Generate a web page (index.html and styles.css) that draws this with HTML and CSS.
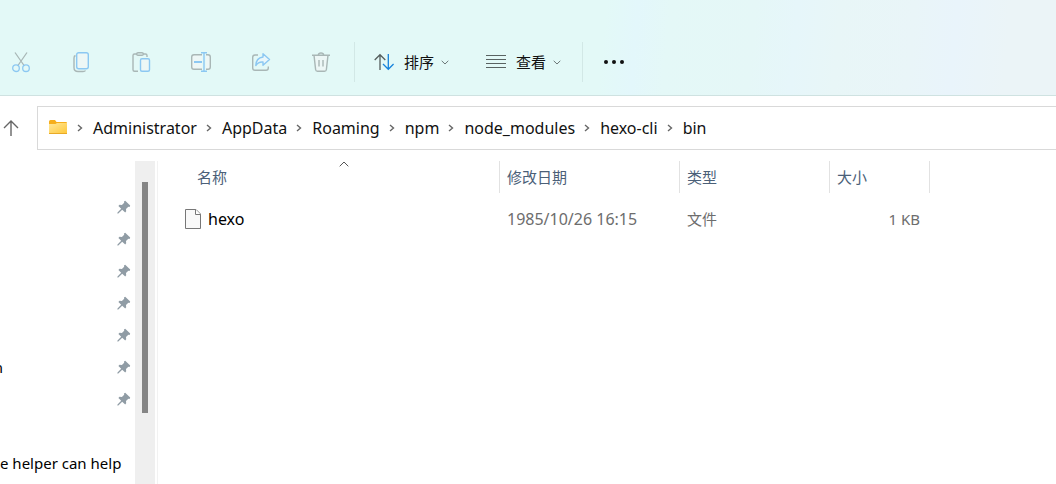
FILE: index.html
```html
<!DOCTYPE html>
<html lang="zh-CN">
<head>
<meta charset="utf-8">
<meta name="viewport" content="width=device-width, initial-scale=1">
<title>bin</title>
<link rel="stylesheet" href="styles.css">
</head>
<body>
<svg class="defs" aria-hidden="true">
  <symbol id="pin" viewBox="0 0 14 14"><path d="M8.2.8 13.2 5.6 12.6 7 11.3 6.7 9 9 9.2 11.2 8.2 12.4 5.2 9.7 1.3 13.4.3 13.6.5 12.6 4.2 8.7 1.4 5.9 2.5 4.8 4.9 4.9 7.2 2.7 7 1.5Z" fill="#909ca5"/></symbol>
  <symbol id="sep" viewBox="0 0 6 8"><path d="M1 1 4.5 4 1 7" fill="none" stroke="#666" stroke-width="1.4"/></symbol>
  <symbol id="down" viewBox="0 0 8 5"><path d="M.7.8 4 4 7.3.8" fill="none" stroke="#6c7777" stroke-width="1"/></symbol>
</svg>
<header class="toolbar">
  <button class="tool" aria-label="剪切"><svg width="20" height="22" viewBox="0 0 20 22" fill="none" stroke-width="1.3"><path d="M4 1.5 13.4 15M16 1.5 6.6 15" stroke="#a9b7b6"/><circle cx="5" cy="17.2" r="3.3" stroke="#8cc8f2"/><circle cx="15" cy="17.2" r="3.3" stroke="#8cc8f2"/></svg></button>
  <button class="tool" aria-label="复制"><svg width="20" height="22" viewBox="0 0 20 22" fill="none" stroke-width="1.4"><path d="M4.500 4.500Q3 5 3 7v9.500Q3 20.500 7 20.500H12q2 0 2.500-1" stroke="#a9b7b6"/><rect x="5.700" y="1.700" width="11.600" height="16" rx="2" fill="#edf7f6" stroke="#8cc8f2"/></svg></button>
  <button class="tool" aria-label="粘贴"><svg width="20" height="22" viewBox="0 0 20 22" fill="none" stroke-width="1.4"><path d="M7 20.300H3.500Q2 20.300 2 18.800V4.500Q2 3 3.500 3H6M12 3h2.500Q16 3 16 4.500V6" stroke="#a9b7b6"/><rect x="5.700" y="1.700" width="6.600" height="2.600" rx="1.300" stroke="#a9b7b6"/><rect x="9.500" y="7.700" width="9" height="12.600" rx="1.500" fill="#edf7f6" stroke="#8cc8f2"/></svg></button>
  <button class="tool" aria-label="重命名"><svg width="22" height="22" viewBox="0 0 22 22" fill="none" stroke-width="1.400"><path d="M12 18.300H4Q1.700 18.300 1.700 16V6Q1.700 3.700 4 3.700h8M16 3.700h2Q20.300 3.700 20.300 6v10q0 2.300-2.300 2.300h-2" fill="#edf7f6" stroke="#a9b7b6"/><path d="M14 2v18M11 1.700h6M11 20.300h6" stroke="#8cc8f2"/><path d="M4 11h8" stroke="#8cc8f2" stroke-width="2"/></svg></button>
  <button class="tool" aria-label="共享"><svg width="22" height="22" viewBox="0 0 22 22" fill="none" stroke-width="1.400" stroke-linejoin="round"><path d="M8 4H5Q2.700 4 2.700 6.300V17q0 2.300 2.300 2.300h11q2.300 0 2.300-2.300v-1.500" stroke="#a9b7b6"/><path d="M13 2.700 19.500 8.500 13 14.300V11Q8.500 10.500 5.800 14.500 6 7 13 6Z" fill="#e9f7fb" stroke="#8cc8f2"/></svg></button>
  <button class="tool" aria-label="删除"><svg width="20" height="22" viewBox="0 0 20 22" fill="none" stroke="#a9b7b6" stroke-width="1.400"><path d="M3 4.200 4.600 18.500Q4.800 20.300 6.500 20.300h7q1.700 0 1.900-1.800L17 4.200" fill="#edf7f6"/><path d="M1 4.200h18M7.300 4Q7.500 2 10 2t2.700 2M8 9v6.500M12 9v6.500"/></svg></button>
  <span class="divider"></span>
  <button class="menu"><svg width="20" height="18" viewBox="0 0 20 18" fill="none" stroke-width="1.300"><path d="M6 17V2M.7 7 6 1.700 11.300 7" stroke="#555e5d"/><path d="M14.300 1v15M9 11l5.300 5.300L19.600 11" stroke="#1583dc"/></svg><span>排序</span><svg width="8" height="5"><use href="#down"/></svg></button>
  <button class="menu"><svg width="20" height="14" viewBox="0 0 20 14" stroke="#596362"><path d="M0 .5h20M0 4.500h20M0 8.500h20M0 12.500h20"/></svg><span>查看</span><svg width="8" height="5"><use href="#down"/></svg></button>
  <span class="divider"></span>
  <button class="more" aria-label="更多"><svg width="22" height="6" viewBox="0 0 22 6" fill="#111"><circle cx="3" cy="3" r="2"/><circle cx="11" cy="3" r="2"/><circle cx="19" cy="3" r="2"/></svg></button>
</header>
<div class="address">
  <button class="up" aria-label="上移"><svg width="18" height="18" viewBox="0 0 18 18" fill="none" stroke="#666" stroke-width="1.400"><path d="M9 17V2M2 9l7-7 7 7"/></svg></button>
  <nav class="path" aria-label="路径">
    <svg width="18" height="16" viewBox="0 0 18 16"><defs><linearGradient id="fold" x2="1" y2="1"><stop stop-color="#ffe79a"/><stop offset="1" stop-color="#ffc93c"/></linearGradient></defs><path d="M0 1.500Q0 0 1.500 0H6l1.500 2H17q1 0 1 1v10H0Z" fill="#f6ae1c"/><path d="M0 4h6.500L8 3h10v10H0Z" fill="url(#fold)"/><path d="M0 13.500h18" stroke="#e9aa27"/></svg>
    <ol class="crumbs">
      <li><svg class="sep"><use href="#sep"/></svg><a href="#">Administrator</a></li>
      <li><svg class="sep"><use href="#sep"/></svg><a href="#">AppData</a></li>
      <li><svg class="sep"><use href="#sep"/></svg><a href="#">Roaming</a></li>
      <li><svg class="sep"><use href="#sep"/></svg><a href="#">npm</a></li>
      <li><svg class="sep"><use href="#sep"/></svg><a href="#">node_modules</a></li>
      <li><svg class="sep"><use href="#sep"/></svg><a href="#">hexo-cli</a></li>
      <li><svg class="sep"><use href="#sep"/></svg><a href="#">bin</a></li>
    </ol>
  </nav>
</div>
<div class="content">
  <aside class="sidebar">
    <ul class="places">
      <li><svg class="pin"><use href="#pin"/></svg></li>
      <li><svg class="pin"><use href="#pin"/></svg></li>
      <li><svg class="pin"><use href="#pin"/></svg></li>
      <li><svg class="pin"><use href="#pin"/></svg></li>
      <li><svg class="pin"><use href="#pin"/></svg></li>
      <li><span class="clipped">n</span><svg class="pin"><use href="#pin"/></svg></li>
      <li><svg class="pin"><use href="#pin"/></svg></li>
      <li></li>
      <li><span>e helper can help</span></li>
    </ul>
  </aside>
  <div class="scrollbar"><div class="thumb"></div></div>
  <main class="files">
    <table>
      <colgroup><col class="c-name"><col class="c-date"><col class="c-type"><col class="c-size"></colgroup>
      <thead><tr><th>名称<svg class="sorted" viewBox="0 0 10 6"><path d="M.7 5.300 5 1l4.300 4.300" fill="none" stroke="#555"/></svg></th><th>修改日期</th><th>类型</th><th>大小</th></tr></thead>
      <tbody><tr><td class="latin"><span class="file"><svg width="16" height="20" viewBox="0 0 16 20" fill="#f9f9f9" stroke="#777"><path d="M.5.500H11L15.500 5v14.500H.5Z"/><path d="M10.500.500V5.500h5" fill="#fff"/></svg>hexo</span></td><td class="latin">1985/10/26 16:15</td><td>文件</td><td>1 KB</td></tr></tbody>
    </table>
  </main>
</div>
</body>
</html>
```
FILE: styles.css
```css
* { box-sizing: border-box; }
body {
  margin: 0;
  min-height: 100vh;
  display: flex;
  flex-direction: column;
  overflow: hidden;
  background: #fff;
  color: #111;
  font: 15px/20px "Noto Sans", "Noto Sans CJK SC", sans-serif;
}
button { border: 0; padding: 0; background: none; color: inherit; font: inherit; }
svg { display: block; flex: none; }
ul, ol { list-style: none; margin: 0; padding: 0; }
.defs { position: absolute; width: 0; height: 0; }

.toolbar {
  display: flex;
  align-items: center;
  padding: 42px 0 13px;
  border-bottom: 1px solid #cfe2e1;
  background: linear-gradient(95deg, #e3f9f7 0%, #e3f9f7 57%, #e3f7fb 60%, #e4f8f7 63%, #e5f7f7 71%, #e6f6fa 75%, #e8f6f7 79%, #e9f5f8 86%, #e9f4fb 90%, #ebf4f7 95%);
}
.tool { display: flex; justify-content: center; width: 42px; margin-right: 18px; }
.divider { width: 1px; height: 40px; background: #d2e8e6; }
.tool + .divider { margin-left: -6px; }
.menu { display: flex; align-items: center; margin: 0 18px 0 19px; }
.menu span { margin: 0 7px 0 10px; }
.menu + .divider { margin-left: 3px; }
.more { margin-left: 20px; }

.address { display: flex; align-items: center; padding: 10px 0 11px; }
.up { width: 37px; padding-left: 2px; }
.path {
  flex: 1;
  display: flex;
  align-items: center;
  gap: 1px;
  height: 44px;
  padding-left: 11px;
  border: 1px solid #d9d9d9;
  border-right: 0;
}
.crumbs { display: flex; font-size: 16px; }
.crumbs li { display: flex; align-items: center; }
.crumbs a { color: inherit; text-decoration: none; }
.sep { width: 6px; height: 8px; margin: 0 10px 0 9px; }

.content { flex: 1; display: grid; grid-template-columns: 135px 20px 1fr; }
.sidebar { padding-top: 30px; color: #000; }
.places li { display: flex; align-items: center; height: 32px; white-space: nowrap; }
.clipped { display: flex; justify-content: flex-end; width: 3px; overflow: hidden; }
.pin { width: 14px; height: 14px; margin: 0 4px 0 auto; }
.scrollbar { padding: 21px 7px 0; background: #efefef; }
.thumb { height: 231px; background: #858585; }

.files { margin-left: 2px; border-left: 1px solid #f2f2f2; }
table { width: 772px; table-layout: fixed; border-collapse: separate; border-spacing: 0; }
.c-name { width: 342px; }
.c-date { width: 180px; }
.c-type { width: 150px; }
.c-size { width: 100px; }
th, td { padding: 0 10px 0 7px; text-align: left; font-weight: 400; }
th { position: relative; height: 32px; border-right: 1px solid #e2e2e2; color: #4b6078; }
th:first-child { padding-left: 39px; }
.sorted { position: absolute; top: 0; left: 181px; width: 10px; height: 6px; }
td { height: 52px; color: #6d6d6d; }
td:first-child { padding-left: 27px; color: #000; }
td:last-child { text-align: right; }
.latin { font-size: 16px; }
.file { display: flex; align-items: center; gap: 7px; }
```
